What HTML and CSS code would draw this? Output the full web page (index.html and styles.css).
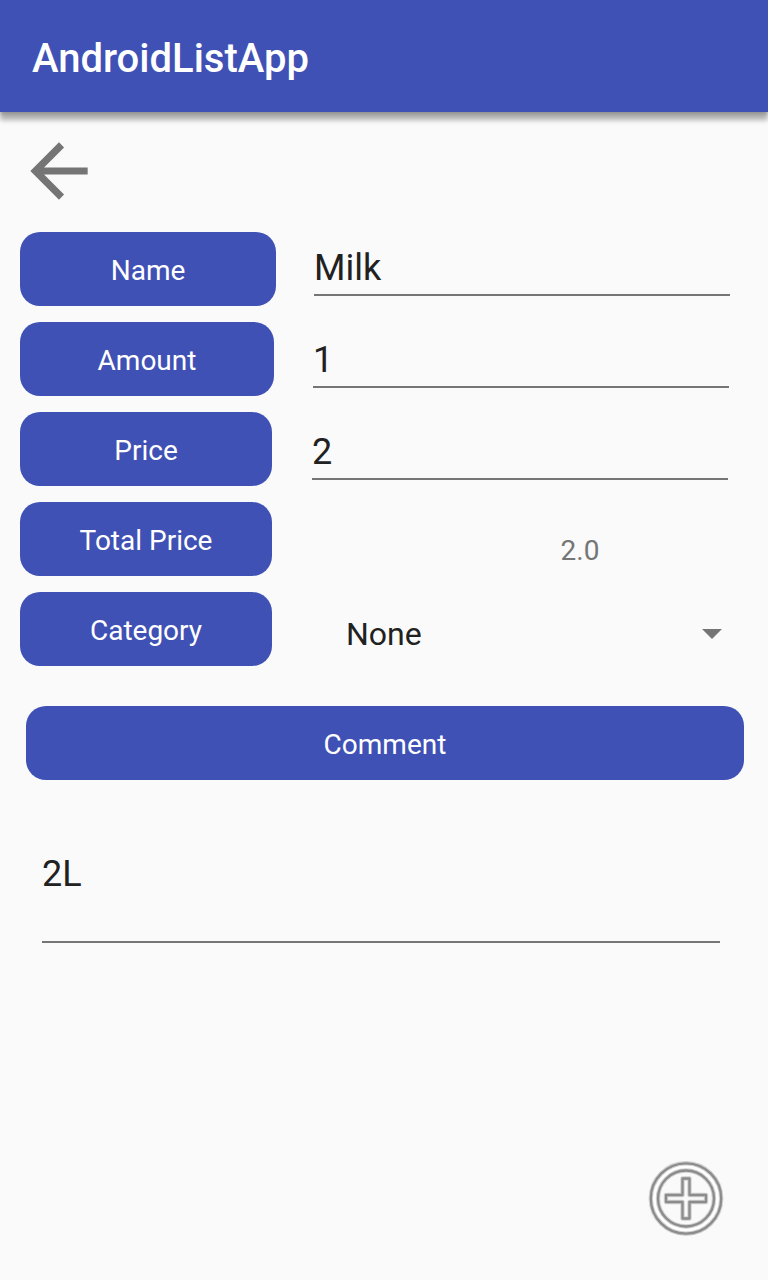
FILE: index.html
```html
<!DOCTYPE html>
<html lang="en">
<head>
<meta charset="utf-8">
<title>AndroidListApp</title>
<link rel="stylesheet" href="styles.css">
</head>
<body>
<div class="screen">
  <header class="app-bar"><h1 class="app-title">AndroidListApp</h1></header>
  <nav class="nav">
    <svg class="back" viewBox="0 0 24 24" aria-label="Back"><path d="M20 11H7.83l5.59-5.59L12 4l-8 8 8 8 1.41-1.41L7.83 13H20v-2z"/></svg>
  </nav>
  <main class="form">
    <div class="columns">
      <div class="labels">
        <div class="label label-name">Name</div>
        <div class="label label-amount">Amount</div>
        <div class="label">Price</div>
        <div class="label">Total Price</div>
        <div class="label">Category</div>
      </div>
      <div class="values">
        <div class="field field-name">Milk</div>
        <div class="field field-amount">1</div>
        <div class="field">2</div>
        <div class="total">2.0</div>
        <div class="spinner">
          <span>None</span>
          <svg class="caret" viewBox="0 0 20 10"><path d="M0 0h20L10 10z"/></svg>
        </div>
      </div>
    </div>
    <div class="label label-comment">Comment</div>
    <div class="comment">2L</div>
  </main>
  <footer class="actions">
    <svg class="add" viewBox="0 0 76 76" aria-label="Add">
      <circle class="ring-fill" cx="38" cy="38.500" r="31.600"/>
      <g class="halo">
        <circle cx="38" cy="38.500" r="35.200"/><circle cx="38" cy="38.500" r="28"/>
        <path d="M34.500 18.500h7v16.500h16.500v7h-16.500v16.500h-7v-16.500h-16.500v-7h16.500z"/>
      </g>
      <g class="ink">
        <circle cx="38" cy="38.500" r="35.200"/><circle cx="38" cy="38.500" r="28"/>
        <path d="M34.500 18.500h7v16.500h16.500v7h-16.500v16.500h-7v-16.500h-16.500v-7h16.500z"/>
      </g>
    </svg>
  </footer>
</div>
</body>
</html>
```
FILE: styles.css
```css
* { box-sizing: border-box; }

body {
  margin: 0;
  background: #fafafa;
  color: #212121;
  font-family: Roboto, sans-serif;
}

.screen {
  display: flex;
  flex-direction: column;
  width: 768px;
  height: 1280px;
  overflow: hidden;
}

.app-bar {
  height: 112px;
  padding: 0 32px;
  background: #3f51b5;
  box-shadow: 0 8px 5px 0 rgba(0, 0, 0, 0.3), 0 2px 3px 0 rgba(0, 0, 0, 0.16);
}

.app-title {
  margin: 0;
  color: #fff;
  font-size: 40px;
  font-weight: 500;
  line-height: 118px;
}

.nav {
  height: 120px;
  padding: 16px 0 0 16px;
}

.back {
  display: block;
  width: 86px;
  height: 86px;
  fill: #757575;
}

.columns {
  display: flex;
  height: 474px;
  padding-left: 20px;
}

.labels {
  display: flex;
  flex-direction: column;
  gap: 16px;
  width: 292px;
}

.label {
  width: 252px;
  height: 74px;
  border-radius: 20px;
  background: #3f51b5;
  color: #fff;
  font-size: 28px;
  line-height: 78px;
  text-align: center;
}

.label-name { width: 256px; }
.label-amount { width: 254px; }

.values { width: 456px; }

.field {
  width: 416px;
  height: 64px;
  margin-bottom: 28px;
  border-bottom: 2px solid #757575;
  font-size: 36px;
  line-height: 72px;
}

.field-name { margin-left: 2px; }
.field-amount { margin-left: 1px; }

.total {
  height: 80px;
  padding-left: 80px;
  color: #757575;
  font-size: 28px;
  line-height: 85px;
  text-align: center;
}

.spinner {
  display: flex;
  align-items: center;
  justify-content: space-between;
  height: 92px;
  padding: 0 46px 0 34px;
  font-size: 32px;
}

.caret {
  width: 20px;
  height: 10px;
  fill: #757575;
}

.label-comment {
  width: 718px;
  margin-left: 26px;
}

.comment {
  width: 678px;
  height: 99px;
  margin: 64px 0 0 42px;
  border-bottom: 2px solid #757575;
  font-size: 36px;
  line-height: 60px;
}

.actions {
  display: flex;
  justify-content: flex-end;
  margin-top: auto;
  padding: 0 44px 44px 0;
}

.add {
  width: 76px;
  height: 76px;
  fill: none;
}

.ring-fill {
  stroke: #fff;
  stroke-width: 6;
}

.halo {
  stroke: #d0d0d0;
  stroke-width: 4.4;
  stroke-linejoin: round;
}

.ink {
  stroke: #8c8c8c;
  stroke-width: 2.3;
  stroke-linejoin: round;
}
```
